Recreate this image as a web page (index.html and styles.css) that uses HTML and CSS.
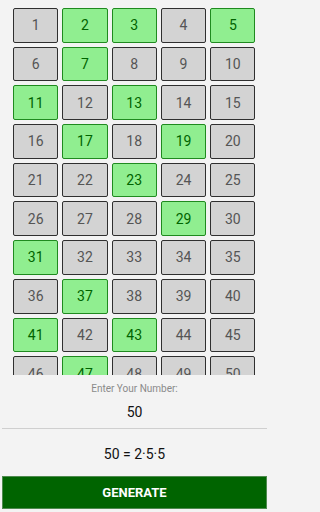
FILE: index.html
```html
<!DOCTYPE html>
<html>
<head>
<meta charset="utf-8">
<link rel="stylesheet" href="styles.css">
</head>
<body>
<div class="app">
  <div class="grid-wrap">
    <div class="grid">
      <div class="cell">1</div><div class="cell prime">2</div><div class="cell prime">3</div><div class="cell">4</div><div class="cell prime">5</div>
      <div class="cell">6</div><div class="cell prime">7</div><div class="cell">8</div><div class="cell">9</div><div class="cell">10</div>
      <div class="cell prime">11</div><div class="cell">12</div><div class="cell prime">13</div><div class="cell">14</div><div class="cell">15</div>
      <div class="cell">16</div><div class="cell prime">17</div><div class="cell">18</div><div class="cell prime">19</div><div class="cell">20</div>
      <div class="cell">21</div><div class="cell">22</div><div class="cell prime">23</div><div class="cell">24</div><div class="cell">25</div>
      <div class="cell">26</div><div class="cell">27</div><div class="cell">28</div><div class="cell prime">29</div><div class="cell">30</div>
      <div class="cell prime">31</div><div class="cell">32</div><div class="cell">33</div><div class="cell">34</div><div class="cell">35</div>
      <div class="cell">36</div><div class="cell prime">37</div><div class="cell">38</div><div class="cell">39</div><div class="cell">40</div>
      <div class="cell prime">41</div><div class="cell">42</div><div class="cell prime">43</div><div class="cell">44</div><div class="cell">45</div>
      <div class="cell">46</div><div class="cell prime">47</div><div class="cell">48</div><div class="cell">49</div><div class="cell">50</div>
    </div>
  </div>
  <div class="label">Enter Your Number:</div>
  <div class="input">50</div>
  <div class="result">50 = 2·5·5</div>
  <div class="button">GENERATE</div>
</div>
</body>
</html>
```
FILE: styles.css
```css
html, body {
  margin: 0;
  padding: 0;
  background: #f3f3f3;
}
.app {
  width: 269px;
  height: 512px;
  font-family: Roboto, "Liberation Sans", sans-serif;
  display: flex;
  flex-direction: column;
}
.grid-wrap {
  height: 375px;
  overflow: hidden;
  padding: 8px 13.5px 0 13px;
  box-sizing: border-box;
}
.grid {
  display: grid;
  grid-template-columns: repeat(5, 1fr);
  grid-auto-rows: 34.7px;
  column-gap: 4px;
  row-gap: 4px;
}
.cell {
  background: #d3d3d3;
  border: 1.3px solid #2f2f2f;
  border-radius: 2px;
  display: flex;
  align-items: center;
  justify-content: center;
  font-size: 14px;
  color: #555;
}
.cell.prime {
  background: #90ee90;
  border-color: #1f8a1f;
  color: #006400;
}
.label {
  margin-top: 7px;
  height: 14px;
  line-height: 14px;
  text-align: center;
  font-size: 10px;
  color: #8a8a8a;
}
.input {
  margin: 0 2px;
  height: 33px;
  line-height: 32px;
  text-align: center;
  font-size: 14px;
  color: #111;
  border-bottom: 1.5px solid #cfcfcf;
  box-sizing: border-box;
}
.result {
  height: 47px;
  line-height: 50px;
  text-align: center;
  font-size: 14px;
  color: #111;
}
.button {
  margin: 0 2px;
  height: 33px;
  background: #006400;
  border: 1px solid #4e8a4e;
  box-sizing: border-box;
  display: flex;
  align-items: center;
  justify-content: center;
  color: #fff;
  font-weight: 700;
  font-size: 13px;
}
```
